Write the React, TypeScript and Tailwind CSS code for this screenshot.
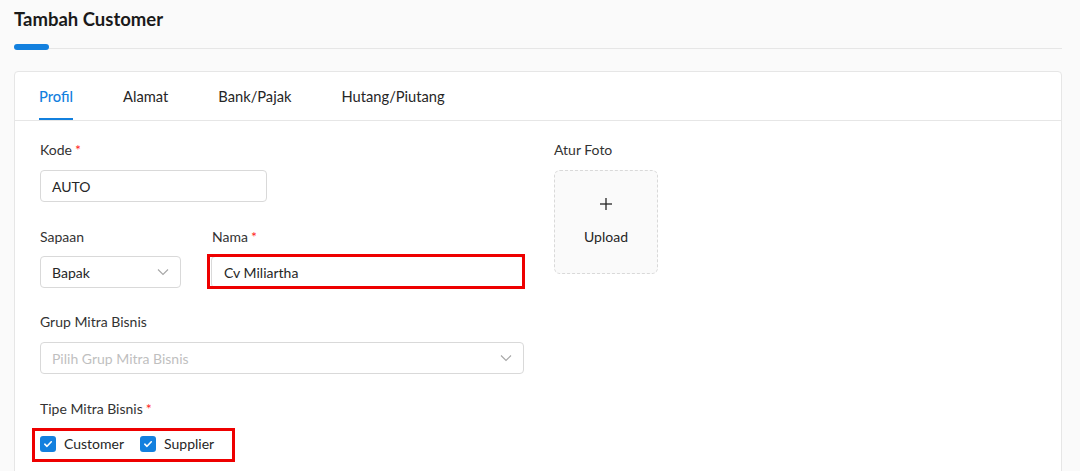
import React from 'react';

const font = { fontFamily: 'Lato, "Noto Sans", sans-serif' };

const Chevron: React.FC = () => (
  <svg width="14" height="14" viewBox="0 0 14 14" fill="none" className="shrink-0">
    <polyline points="2,4.5 7,9.5 12,4.5" stroke="#a6a6a6" strokeWidth="1.1" />
  </svg>
);

const Label: React.FC<{ text: string; required?: boolean }> = ({ text, required }) => (
  <div className="h-5 text-[14px] leading-5 text-[#333333]">
    {text}
    {required && <span className="ml-[3px] text-[#ff1f1f]">*</span>}
  </div>
);

const Check: React.FC<{ label: string }> = ({ label }) => (
  <label className="flex items-center gap-2">
    <span className="flex h-4 w-4 items-center justify-center rounded-[3px] bg-[#1380de]">
      <svg width="10" height="10" viewBox="0 0 10 10" fill="none">
        <polyline points="1.8,5.2 4,7.3 8.3,2.8" stroke="white" strokeWidth="1.6" strokeLinecap="round" strokeLinejoin="round" />
      </svg>
    </span>
    <span className="text-[14px] leading-5 text-[#262626]">{label}</span>
  </label>
);

export default function App() {
  const tabs = ['Profil', 'Alamat', 'Bank/Pajak', 'Hutang/Piutang'];

  return (
    <div className="h-[471px] overflow-hidden bg-[#fafafa] pl-[14px] pr-[18px] pt-[7px]" style={font}>
      <h1 className="text-[18.5px] font-bold leading-6 text-[#1a1a1a]">Tambah Customer</h1>

      <div className="mt-[13px] flex items-center">
        <div className="h-[6px] w-[35px] rounded-full bg-[#1380de]" />
        <div className="mt-[2px] h-px flex-1 bg-[#e6e6e6]" />
      </div>

      <div className="mt-[21px] rounded-t-[4px] border border-[#e6e6e6] bg-white">
        {/* tabs */}
        <div className="flex h-[49px] gap-[50px] border-b border-[#e6e6e6] pl-[24px]">
          {tabs.map((t, i) => (
            <div
              key={t}
              className={
                i === 0
                  ? 'flex items-center border-b-2 border-[#1380de] pt-[2px] text-[14.7px] font-medium text-[#1380de]'
                  : 'flex items-center border-b-2 border-transparent pt-[2px] text-[14.7px] text-[#262626]'
              }
            >
              {t}
            </div>
          ))}
        </div>

        <div className="flex gap-[30px] pl-[25px] pt-[19px] pb-6">
          {/* left form */}
          <div className="flex w-[484px] flex-col">
            <Label text="Kode" required />
            <div className="mt-[10px] flex h-[32px] w-[227px] items-center rounded-[4px] border border-[#d9d9d9] px-[11px] text-[14px] text-[#262626]">
              AUTO
            </div>

            <div className="mt-[25px] flex gap-[30px]">
              <div className="w-[141px]">
                <Label text="Sapaan" />
                <div className="mt-[9px] flex h-[32px] items-center justify-between rounded-[4px] border border-[#d9d9d9] pl-[11px] pr-[10px] text-[14px] text-[#262626]">
                  Bapak
                  <Chevron />
                </div>
              </div>
              <div className="flex-1">
                <div className="pl-px">
                  <Label text="Nama" required />
                </div>
                <div className="relative mt-[9px]">
                  <div className="flex h-[32px] items-center rounded-[4px] border border-[#d9d9d9] px-[12px] text-[14px] text-[#262626]">
                    Cv Miliartha
                  </div>
                  <div className="pointer-events-none absolute -left-[4px] -right-px -top-[2px] -bottom-px border-[3px] border-[#ee0000]" />
                </div>
              </div>
            </div>

            <div className="mt-[24px]">
              <Label text="Grup Mitra Bisnis" />
              <div className="mt-[10px] flex h-[32px] items-center justify-between rounded-[4px] border border-[#d9d9d9] pl-[11px] pr-[10px] text-[14px] text-[#bfbfbf]">
                Pilih Grup Mitra Bisnis
                <Chevron />
              </div>
            </div>

            <div className="mt-[25px]">
              <Label text="Tipe Mitra Bisnis" required />
              <div className="relative mt-[15px] flex gap-[16px]">
                <Check label="Customer" />
                <Check label="Supplier" />
                <div className="pointer-events-none absolute -left-[8px] -top-[6px] h-[34px] w-[203px] border-[3px] border-[#ee0000]" />
              </div>
            </div>
          </div>

          {/* photo */}
          <div className="flex flex-col">
            <Label text="Atur Foto" />
            <div className="mt-[10px] flex h-[104px] w-[104px] flex-col items-center justify-center rounded-[6px] border border-dashed border-[#d9d9d9] bg-[#fafafa]">
              <svg width="14" height="14" viewBox="0 0 14 14">
                <line x1="7" y1="1" x2="7" y2="13" stroke="#262626" strokeWidth="1.3" />
                <line x1="1" y1="7" x2="13" y2="7" stroke="#262626" strokeWidth="1.3" />
              </svg>
              <div className="mt-[16px] text-[14px] leading-5 text-[#262626]">Upload</div>
            </div>
          </div>
        </div>
      </div>
    </div>
  );
}
